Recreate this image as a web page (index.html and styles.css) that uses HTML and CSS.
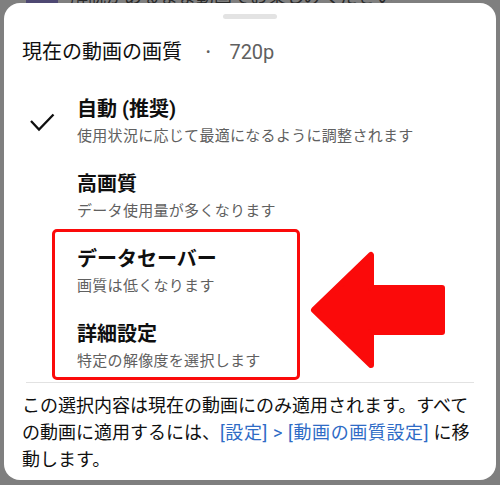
FILE: index.html
```html
<!DOCTYPE html>
<html lang="ja">
<head>
<meta charset="utf-8">
<link rel="stylesheet" href="styles.css">
</head>
<body>
<div class="behind">
  <div class="thumb"></div>
  <div class="behind-text">解説があるまま動画でお楽しみください</div>
</div>
<div class="sheet">
  <div class="handle"></div>
  <div class="title"><span>現在の動画の画質</span><span class="dot">•</span><span class="res">720p</span></div>
  <div class="options">
    <div class="option">
      <div class="icon">
        <svg width="26" height="22" viewBox="0 0 26 22"><path d="M2 9 L10 17.5 L24.5 2.5" fill="none" stroke="#0f0f0f" stroke-width="2.3" stroke-linecap="butt" stroke-linejoin="miter"/></svg>
      </div>
      <div class="text">
        <div class="opt-title">自動 (推奨)</div>
        <div class="opt-sub">使用状況に応じて最適になるように調整されます</div>
      </div>
    </div>
    <div class="option">
      <div class="icon"></div>
      <div class="text">
        <div class="opt-title">高画質</div>
        <div class="opt-sub">データ使用量が多くなります</div>
      </div>
    </div>
    <div class="option">
      <div class="icon"></div>
      <div class="text">
        <div class="opt-title">データセーバー</div>
        <div class="opt-sub">画質は低くなります</div>
      </div>
    </div>
    <div class="option">
      <div class="icon"></div>
      <div class="text">
        <div class="opt-title">詳細設定</div>
        <div class="opt-sub">特定の解像度を選択します</div>
      </div>
    </div>
  </div>
  <div class="divider"></div>
  <p class="footer">この選択内容は現在の動画にのみ適用されます。すべての動画に適用するには、<span class="link">[設定] &gt; [動画の画質設定]</span> に移動します。</p>
  <div class="highlight"></div>
  <svg class="arrow" width="500" height="485" viewBox="0 0 500 485">
    <polygon points="314,310 371,255 371,288 442,288 442,332 371,332 371,365" fill="#fb0a0a" stroke="#fb0a0a" stroke-width="6" stroke-linejoin="round"/>
  </svg>
</div>
</body>
</html>
```

FILE: styles.css
```css
html, body {
  margin: 0;
  padding: 0;
}
body {
  width: 500px;
  height: 485px;
  overflow: hidden;
  background: #7f7f7f;
  font-family: Roboto, "Noto Sans CJK JP", sans-serif;
  color: #0f0f0f;
}
.behind {
  height: 3px;
  overflow: hidden;
  display: flex;
  align-items: flex-end;
  padding-left: 26px;
}
.thumb {
  width: 32px;
  height: 20px;
  flex: none;
  background: #4e4872;
}
.behind-text {
  margin-left: 12px;
  font-size: 18px;
  line-height: 20px;
  color: #2a2a2a;
  white-space: nowrap;
  margin-bottom: -4px;
}
.sheet {
  position: relative;
  margin: 0 4px;
  height: 477px;
  background: #fff;
  border-radius: 16px;
}
.handle {
  width: 54px;
  height: 5px;
  margin: 0 auto;
  position: relative;
  top: 11px;
  border-radius: 3px;
  background: #e3e3e3;
}
.title {
  margin-top: 30px;
  padding-left: 18px;
  font-size: 20px;
  line-height: 28px;
  display: flex;
  align-items: center;
}
.dot {
  color: #606060;
  font-size: 13px;
  margin: 0 19px 0 24px;
}
.res {
  color: #606060;
}
.options {
  margin-top: 28px;
  display: flex;
  flex-direction: column;
  gap: 21px;
}
.option {
  display: flex;
}
.icon {
  width: 73px;
  flex: none;
  display: flex;
  align-items: center;
  padding-left: 25px;
  box-sizing: border-box;
  padding-top: 4px;
}
.opt-title {
  font-size: 20px;
  font-weight: 700;
  line-height: 30px;
}
.opt-sub {
  font-size: 15px;
  letter-spacing: 0.3px;
  line-height: 24px;
  color: #606060;
}
.divider {
  margin: 9px 22px 0;
  height: 1px;
  background: #e2e2e2;
}
.footer {
  margin: 9px 0 0;
  padding: 0 18px;
  font-size: 18px;
  line-height: 27px;
}
.link {
  color: #2e6bc6;
  letter-spacing: 0.6px;
}
.highlight {
  position: absolute;
  left: 48px;
  top: 226px;
  width: 248px;
  height: 151px;
  box-sizing: border-box;
  border: 3px solid #fb0a0a;
  border-radius: 5px;
}
.arrow {
  position: absolute;
  left: -4px;
  top: -3px;
}
```
